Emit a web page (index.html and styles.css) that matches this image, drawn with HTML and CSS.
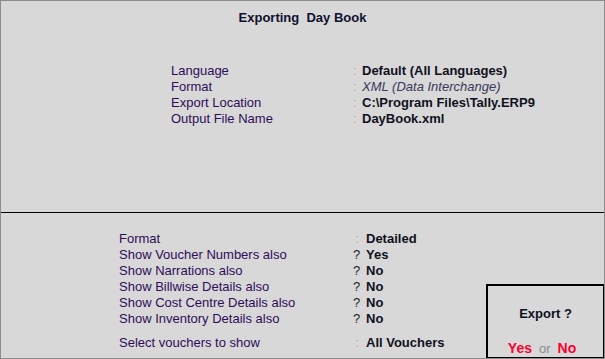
FILE: index.html
```html
<!DOCTYPE html>
<html>
<head>
  <title>Exporting Day Book</title>
  <link rel="stylesheet" href="styles.css">
</head>
<body>
  <div class="screen">

    <div class="top-pane">
      <h1 class="title">Exporting&nbsp; Day Book</h1>

      <div class="info-grid">
        <span class="label">Language</span>
        <span class="sep">:</span>
        <span class="value">Default (All Languages)</span>

        <span class="label">Format</span>
        <span class="sep">:</span>
        <span class="value value-italic">XML (Data Interchange)</span>

        <span class="label">Export Location</span>
        <span class="sep">:</span>
        <span class="value">C:\Program Files\Tally.ERP9</span>

        <span class="label">Output File Name</span>
        <span class="sep">:</span>
        <span class="value">DayBook.xml</span>
      </div>
    </div>

    <div class="bottom-pane">
      <div class="option-grid">
        <span class="label">Format</span>
        <span class="mark mark-colon">:</span>
        <span class="value">Detailed</span>

        <span class="label">Show Voucher Numbers also</span>
        <span class="mark">?</span>
        <span class="value">Yes</span>

        <span class="label">Show Narrations also</span>
        <span class="mark">?</span>
        <span class="value">No</span>

        <span class="label">Show Billwise Details also</span>
        <span class="mark">?</span>
        <span class="value">No</span>

        <span class="label">Show Cost Centre Details also</span>
        <span class="mark">?</span>
        <span class="value">No</span>

        <span class="label">Show Inventory Details also</span>
        <span class="mark">?</span>
        <span class="value">No</span>

        <span class="label spaced">Select vouchers to show</span>
        <span class="mark mark-colon spaced">:</span>
        <span class="value spaced">All Vouchers</span>
      </div>
    </div>

    <!-- confirmation popup -->
    <div class="confirm-box">
      <div class="confirm-question">Export ?</div>
      <div class="confirm-answers">
        <span class="answer">Yes</span>
        <span class="answer-or">or</span>
        <span class="answer">No</span>
      </div>
    </div>

  </div>
</body>
</html>
```

FILE: styles.css
```css
body {
  margin: 0;
  font-family: "Liberation Sans", Arial, sans-serif;
  font-size: 13px;
  line-height: 16px;
  background: #d8d8d8;
}

.screen {
  position: relative;
  width: 605px;
  height: 359px;
  box-sizing: border-box;
  border: 1px solid #8c8c8c;
  background: #d8d8d8;
  display: flex;
  flex-direction: column;
  overflow: hidden;
}

.top-pane {
  height: 212px;
  border-bottom: 1px solid #000;
  padding-top: 9px;
  box-sizing: border-box;
}

.title {
  margin: 0;
  font-size: 13px;
  font-weight: bold;
  text-align: center;
  color: #101030;
}

.info-grid {
  display: grid;
  grid-template-columns: 182px 9px auto;
  margin: 37px 0 0 170px;
}

.label {
  color: #2e0c58;
}

.sep {
  color: #a8a488;
}

.value {
  font-weight: bold;
  color: #101020;
}

.value-italic {
  font-weight: normal;
  font-style: italic;
  color: #383858;
}

.bottom-pane {
  flex: 1;
  padding-top: 18px;
}

.option-grid {
  display: grid;
  grid-template-columns: 234px 13px auto;
  margin-left: 118px;
}

.mark {
  text-align: right;
  padding-right: 6px;
  color: #202020;
}

.mark-colon {
  color: #a8a488;
  padding-right: 7px;
}

.spaced {
  margin-top: 8px;
}

.confirm-box {
  position: absolute;
  right: -1px;
  bottom: -1px;
  width: 119px;
  height: 75px;
  box-sizing: border-box;
  border: 2px solid #000;
  background: #d8d8d8;
  display: flex;
  flex-direction: column;
  align-items: center;
}

.confirm-question {
  margin-top: 20px;
  font-weight: bold;
  color: #101020;
}

.confirm-answers {
  display: flex;
  align-items: baseline;
  gap: 7px;
  margin-top: 18px;
  padding-right: 7px;
}

.answer {
  font-size: 14px;
  font-weight: bold;
  color: #ff0030;
}

.answer-or {
  color: #8c8c8c;
}
```
